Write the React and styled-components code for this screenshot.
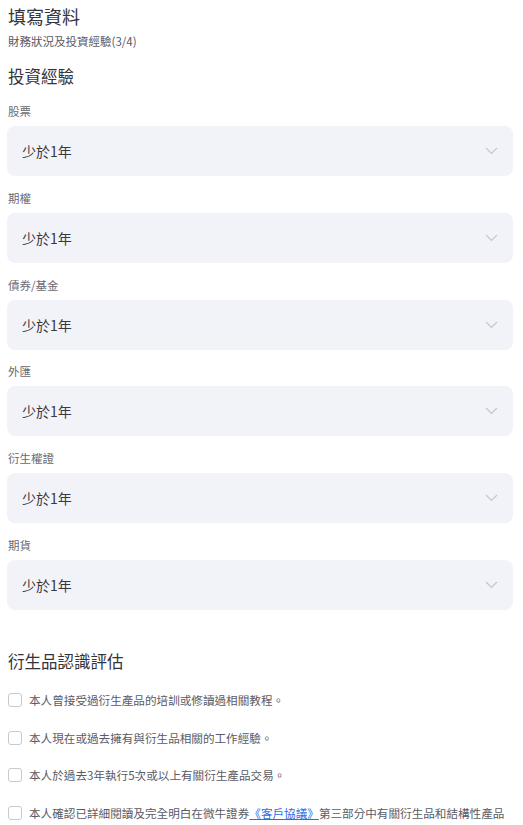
import styled, { createGlobalStyle } from "styled-components";

const GlobalStyle = createGlobalStyle`
  * { box-sizing: border-box; }
  body {
    margin: 0;
    background: #ffffff;
    font-family: "Noto Sans CJK TC", "Noto Sans", sans-serif;
  }
`;

const experience = ["股票", "期權", "債券/基金", "外匯", "衍生權證", "期貨"];

const Page = styled.main`
  padding: 4px 10px 0 7px;
  display: flex;
  flex-direction: column;
`;

const Title = styled.h1`
  margin: 0 0 0 1px;
  font-size: 18px;
  line-height: 24px;
  font-weight: 400;
  color: #34343c;
`;

const Subtitle = styled.p`
  margin: 4px 0 0 1px;
  font-size: 11.5px;
  line-height: 18px;
  color: #5a5a64;
`;

const SectionTitle = styled.h2`
  margin: ${(p) => p.top}px 0 0 1px;
  font-size: 16.5px;
  line-height: 24px;
  font-weight: 400;
  color: #34343c;
`;

const Fields = styled.div`
  display: flex;
  flex-direction: column;
  margin-top: 15px;
`;

const Field = styled.div`
  display: flex;
  flex-direction: column;
  & + & { margin-top: 13.8px; }
`;

const Label = styled.label`
  margin: 0 0 7px 1px;
  font-size: 11.5px;
  line-height: 16px;
  color: #6a6a74;
`;

const Select = styled.div`
  height: 50px;
  border-radius: 8px;
  background: #f2f3f8;
  display: flex;
  align-items: center;
  justify-content: space-between;
  padding: 0 15px 0 15px;
  font-size: 14px;
  color: #383840;
`;

const Chevron = () => (
  <svg width="13" height="8" viewBox="0 0 13 8">
    <polyline points="1,1 6.5,6.5 12,1" fill="none" stroke="#c6c6ce" strokeWidth="1.2" />
  </svg>
);

const Checks = styled.div`
  display: flex;
  flex-direction: column;
  gap: 19.7px;
  margin-top: 18px;
`;

const CheckRow = styled.div`
  display: flex;
  align-items: flex-start;
  gap: 7px;
  font-size: 11.6px;
  line-height: 18px;
  color: #5a5a64;
`;

const Box = styled.span`
  flex: none;
  width: 14px;
  height: 14px;
  margin: 2px 0 0 1px;
  border: 1px solid #c8c8d0;
  border-radius: 3px;
  background: #fff;
`;

const Link = styled.a`
  color: #2f6be6;
  text-decoration: underline;
`;

export default function App() {
  return (
    <>
      <GlobalStyle />
      <Page>
        <Title>填寫資料</Title>
        <Subtitle>財務狀況及投資經驗(3/4)</Subtitle>
        <SectionTitle top={14}>投資經驗</SectionTitle>
        <Fields>
          {experience.map((name) => (
            <Field key={name}>
              <Label>{name}</Label>
              <Select>
                <span>少於1年</span>
                <Chevron />
              </Select>
            </Field>
          ))}
        </Fields>
        <SectionTitle top={39}>衍生品認識評估</SectionTitle>
        <Checks>
          <CheckRow><Box /><span>本人曾接受過衍生產品的培訓或修讀過相關教程。</span></CheckRow>
          <CheckRow><Box /><span>本人現在或過去擁有與衍生品相關的工作經驗。</span></CheckRow>
          <CheckRow><Box /><span>本人於過去3年執行5次或以上有關衍生產品交易。</span></CheckRow>
          <CheckRow>
            <Box />
            <span>
              本人確認已詳細閱讀及完全明白在微牛證券<Link>《客戶協議》</Link>第三部分中有關衍生品和結構性產品的風險披露。
            </span>
          </CheckRow>
        </Checks>
      </Page>
    </>
  );
}
